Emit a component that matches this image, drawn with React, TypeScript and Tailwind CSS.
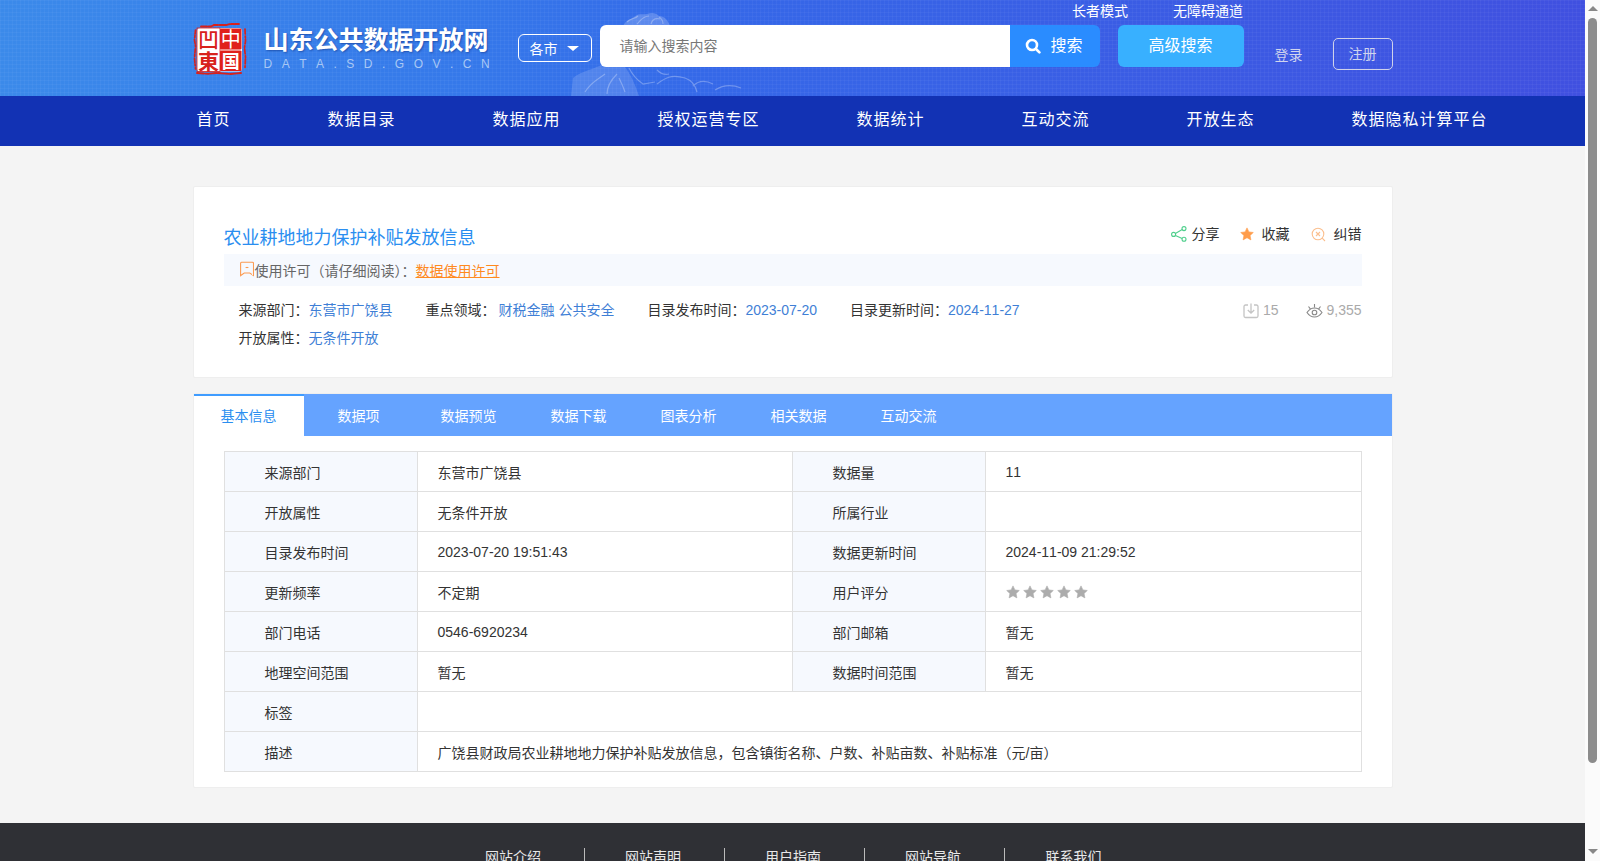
import React from "react";

const nav = ["首页", "数据目录", "数据应用", "授权运营专区", "数据统计", "互动交流", "开放生态", "数据隐私计算平台"];
const tabs = ["基本信息", "数据项", "数据预览", "数据下载", "图表分析", "相关数据", "互动交流"];
const footer = ["网站介绍", "网站声明", "用户指南", "网站导航", "联系我们"];

const Star = ({ c, s = 14 }: { c: string; s?: number }) => (
  <svg width={s} height={s} viewBox="0 0 24 24" fill={c} className="block">
    <path d="M12 1.500l3.300 6.900 7.500 1-5.500 5.200 1.400 7.500L12 18.400l-6.700 3.700 1.400-7.500L1.200 9.400l7.500-1z" stroke={c} strokeWidth="1" strokeLinejoin="round" />
  </svg>
);

function Logo() {
  const f = "'Noto Sans CJK SC',sans-serif";
  return (
    <svg width="54" height="54" viewBox="0 0 54 54" className="block shrink-0">
      <g fill="none" stroke="#d9201a" strokeLinecap="round">
        <path d="M8 4.500h10l3-1.500h12l4-1h9" strokeWidth="1.800" strokeDasharray="6 1.500 3 1" />
        <path d="M2.500 8l-1 10 1 6-1 12 1 11" strokeWidth="1.700" strokeDasharray="4 1.500 2 2" />
        <path d="M52 7l.5 12-1 7 1 9-.5 11" strokeWidth="1.700" strokeDasharray="5 2 1.500 1.500" />
        <path d="M4 51l11 .8 9-.8 13 1 11-1" strokeWidth="1.900" strokeDasharray="7 1.500 3 1" />
      </g>
      <rect x="4" y="6" width="45" height="43.500" rx="3" fill="#fff" />
      <rect x="4" y="6" width="23" height="43.500" fill="none" stroke="#e0201b" strokeWidth="0.800" />
      <rect x="27" y="6.500" width="21.500" height="21" rx="1" fill="#e0201b" />
      <rect x="27" y="28.500" width="21.500" height="20.500" rx="1" fill="#e0201b" />
      <text x="37.750" y="24.500" textAnchor="middle" fontSize="20" fill="#fff" fontFamily={f}>中</text>
      <text x="37.750" y="45.500" textAnchor="middle" fontSize="18" fontWeight="700" fill="#fff" fontFamily={f}>国</text>
      <text x="15.500" y="25" textAnchor="middle" fontSize="21" fontWeight="500" fill="#d8221c" fontFamily={f}>凹</text>
      <text x="15.500" y="46.500" textAnchor="middle" fontSize="21" fontWeight="700" fill="#d8221c" fontFamily={f}>東</text>
    </svg>
  );
}

function Mountain() {
  return (
    <svg width="200" height="96" viewBox="0 0 200 96" className="absolute left-[565px] top-0" fill="#fff">
      <g opacity="0.2">
        <path d="M58 26c3-6 8-7 11-9 4-4 9-2 13-3 5-2 9-1 12 2 5 0 9 4 11 10z" />
      </g>
      <g opacity="0.14">
        <path d="M8 78c10-8 20-8 30-14 8-2 14 1 22 3 6 8 10 17 14 29H6z" />
      </g>
      <g opacity="0.28" fill="none" stroke="#fff" strokeWidth="1.200">
        <path d="M62 22c4-4 8-3 11-6M72 24c3-3 6-8 12-8M86 24c1-4 4-6 9-5M98 24c0-3-1-5-4-7" />
        <path d="M20 92c6-10 12-12 20-18M42 94c0-8 4-14 10-20M60 92c-2-6-4-10-6-14" />
        <path d="M64 68c4 8 8 12 14 16l12-2M92 84c8-6 14-10 28-6 6 2 10 6 12 14M128 86c6-6 12-6 20-2M92 70c4 4 8 5 12 4M150 90c8-5 16-6 26-2" />
      </g>
    </svg>
  );
}

const Th = ({ children, w }: { children?: React.ReactNode; w: string }) => (
  <td className={`${w} h-10 border border-[#e0e0e0] bg-[#f6f9fe] pl-10 align-middle`}>
    <span className="relative top-[1px]">{children}</span>
  </td>
);
const Td = ({ children, w, colSpan }: { children?: React.ReactNode; w?: string; colSpan?: number }) => (
  <td colSpan={colSpan} className={`${w ?? ""} h-10 border border-[#e0e0e0] pl-5 align-middle`}>
    {children}
  </td>
);
const Cjk = ({ children }: { children: React.ReactNode }) => <span className="relative top-[1px]">{children}</span>;

const rows: [string, React.ReactNode, string, React.ReactNode][] = [
  ["来源部门", <Cjk>东营市广饶县</Cjk>, "数据量", "11"],
  ["开放属性", <Cjk>无条件开放</Cjk>, "所属行业", ""],
  ["目录发布时间", "2023-07-20 19:51:43", "数据更新时间", "2024-11-09 21:29:52"],
  [
    "更新频率",
    <Cjk>不定期</Cjk>,
    "用户评分",
    <div className="flex gap-[3px]">
      {[0, 1, 2, 3, 4].map((i) => (
        <Star key={i} c="#acacac" />
      ))}
    </div>,
  ],
  ["部门电话", "0546-6920234", "部门邮箱", <Cjk>暂无</Cjk>],
  ["地理空间范围", <Cjk>暂无</Cjk>, "数据时间范围", <Cjk>暂无</Cjk>],
];

export default function App() {
  return (
    <div className="flex h-[861px] overflow-hidden bg-[#fbfbfb] font-['Liberation_Sans','Noto_Sans_CJK_SC',sans-serif] text-sm text-[#333] [font-kerning:none]">
      <div className="w-[1585px] shrink-0 bg-[#f4f4f4]">
        <header className="relative h-24 bg-[linear-gradient(90deg,#3b8aea_0%,#3578ea_30%,#3568e8_45%,#4050e0_100%)]">
          <div className="absolute inset-0 bg-[linear-gradient(rgba(255,255,255,0.035)_1px,transparent_1px),linear-gradient(90deg,rgba(255,255,255,0.035)_1px,transparent_1px)] bg-[length:4px_4px]" />
          <Mountain />
          <div className="absolute right-[342px] top-[1px] flex gap-[45px] text-white">
            <span>长者模式</span>
            <span>无障碍通道</span>
          </div>
          <div className="relative mx-auto flex w-[1200px] items-start pt-[22px]">
            <Logo />
            <div className="ml-[17px] w-[254px] shrink-0">
              <div className="text-[25px] font-bold leading-[36px] text-white [text-shadow:1px_1px_2px_rgba(10,40,120,0.5)]">山东公共数据开放网</div>
              <div className="text-xs leading-[12px] tracking-[9.5px] whitespace-nowrap text-[#a9c8f4]">DATA.SD.GOV.CN</div>
            </div>
            <div className="mt-3 flex h-7 w-[74px] shrink-0 items-center rounded-md border border-white pl-[11px] text-white">
              <span className="relative top-[1px]">各市</span>
              <span className="ml-[9px] h-0 w-0 border-x-[6px] border-t-[5px] border-x-transparent border-t-white" />
            </div>
            <div className="ml-2 mt-[3px] flex h-[42px] w-[410px] shrink-0 items-center rounded-l-md bg-white pl-5 text-[#777]">请输入搜索内容</div>
            <div className="mt-[3px] flex h-[42px] w-[90px] shrink-0 items-center rounded-r-md bg-[#2a8cff] pl-[15px] text-base text-white">
              <svg width="16" height="16" viewBox="0 0 16 16" fill="none" stroke="#fff" strokeWidth="2.600" strokeLinecap="round">
                <circle cx="7" cy="7" r="5" />
                <path d="M11 11l3.400 3.400" />
              </svg>
              <span className="ml-[10px]">搜索</span>
            </div>
            <div className="ml-[18px] mt-[3px] flex h-[42px] w-[126px] shrink-0 items-center justify-center rounded-md bg-[#38b0ff] text-base text-white">高级搜索</div>
            <span className="ml-[31px] mt-[23px] shrink-0 whitespace-nowrap text-[#d0d4ee]">登录</span>
            <div className="ml-[30px] mt-4 flex h-8 w-[60px] shrink-0 items-center justify-center rounded-[5px] border border-[#cfd2ea] text-[#d0d4ee]">注册</div>
          </div>
        </header>
        <nav className="h-[50px] bg-[#1232b4]">
          <div className="mx-auto flex h-full w-[1200px] items-center gap-[97px] pb-[2px] pl-[4px] text-base tracking-[1px] text-white">
            {nav.map((n) => (
              <span key={n} className="whitespace-nowrap">{n}</span>
            ))}
          </div>
        </nav>

        <main className="mx-auto w-[1200px]">
          <section className="mt-[40px] h-[192px] rounded-[2px] border border-[#eeeeee] bg-white px-[30px]">
            <div className="flex h-[67px] items-start justify-between">
              <h1 className="mt-[39px] text-lg leading-[24px] text-[#2a8ef0]">农业耕地地力保护补贴发放信息</h1>
              <div className="mt-[37px] flex items-center leading-[20px] text-[#333]">
                <svg width="16" height="16" viewBox="0 0 16 16" fill="none" stroke="#4fcf8c" strokeWidth="1.100">
                  <circle cx="2.600" cy="8.400" r="2" />
                  <circle cx="13" cy="2.600" r="2" />
                  <circle cx="13" cy="13.200" r="2" />
                  <path d="M4.400 7.400l6.800-3.800M4.400 9.400l6.800 3" />
                </svg>
                <span className="ml-[5px]">分享</span>
                <span className="ml-5"><Star c="#ff9c4a" /></span>
                <span className="ml-2">收藏</span>
                <svg width="15" height="15" viewBox="0 0 15 15" fill="none" stroke="#fbbf8e" strokeWidth="1.100" className="ml-[21px]">
                  <circle cx="7" cy="7" r="5.800" />
                  <path d="M5 5l4 4M9 5l-4 4M11.200 11.200l2.800 2.800" />
                </svg>
                <span className="ml-2">纠错</span>
              </div>
            </div>
            <div className="flex h-8 items-center bg-[#f6f9fe] pl-4 pt-[2px] text-[#666]">
              <svg width="14" height="16" viewBox="0 0 14 16" fill="none" stroke="#fb9b52" strokeWidth="1.100" className="-mt-[5px]">
                <path d="M1.500 1.200h11a1 1 0 0 1 1 1v12.400l-3.700-2.600H4.200L.6 14.600V2.200a1 1 0 0 1 .9-1z" />
                <path d="M5.600 6.500h2.800" />
              </svg>
              <span className="ml-[1px]">使用许可（请仔细阅读）：</span>
              <span className="text-[#ff8a1e] underline">数据使用许可</span>
            </div>
            <div className="flex pl-[15px] pt-[10px] leading-[28px]">
              <span>来源部门：</span>
              <span className="text-[#3f7fd6]">东营市广饶县</span>
              <span className="ml-[33px]">重点领域：</span>
              <span className="ml-[3px] text-[#3f7fd6]">财税金融 公共安全</span>
              <span className="ml-[33px]">目录发布时间：</span>
              <span className="text-[#3f7fd6]">2023-07-20</span>
              <span className="ml-[33px]">目录更新时间：</span>
              <span className="text-[#3f7fd6]">2024-11-27</span>
              <span className="ml-auto flex items-center text-[#aaa]">
                <svg width="16" height="16" viewBox="0 0 16 16" fill="none" stroke="#c4c4c4" strokeWidth="1.300" className="mt-[1px]">
                  <path d="M5 2H2.500A1.500 1.500 0 0 0 1 3.500v9.500A1.500 1.500 0 0 0 2.500 14.500h11a1.500 1.500 0 0 0 1.500-1.500V3.500A1.500 1.500 0 0 0 13.500 2H11M8 0.500v9.500M4.800 7l3.200 3.200L11.200 7" />
                </svg>
                <span className="ml-1">15</span>
                <svg width="17" height="17" viewBox="0 0 17 17" fill="none" stroke="#888" strokeWidth="1.100" className="ml-[28px] mt-[3px]">
                  <path d="M1 9.500c2-3 4.500-4.500 7.500-4.500s5.500 1.500 7.500 4.500c-2 3-4.500 4.500-7.500 4.500S3 12.500 1 9.500z" />
                  <circle cx="8.500" cy="9.500" r="2.300" />
                  <path d="M2.500 3.500L4.500 6.200M8.500 1V4.500M14.500 3.500l-2 2.700" />
                </svg>
                <span className="ml-[3px]">9,355</span>
              </span>
            </div>
            <div className="pl-[15px] leading-[28px]">
              <span>开放属性：</span>
              <span className="text-[#3f7fd6]">无条件开放</span>
            </div>
          </section>

          <section className="mt-[15px] h-[395px] rounded-[2px] border border-[#eeeeee] bg-white">
            <div className="flex h-[42px] bg-[#65a3ff] text-white">
              {tabs.map((t, i) => (
                <div
                  key={t}
                  className={
                    i === 0
                      ? "flex w-[110px] items-center justify-center border-t-2 border-[#3f9cff] bg-white text-[#2a8ef0]"
                      : "flex w-[110px] items-center justify-center pt-[2px]"
                  }
                >
                  {t}
                </div>
              ))}
            </div>
            <div className="px-[30px] pt-[15px]">
              <table className="w-full table-fixed border-collapse leading-5">
                <tbody>
                  {rows.map((r) => (
                    <tr key={r[0]}>
                      <Th w="w-[193px]">{r[0]}</Th>
                      <Td w="w-[375px]">{r[1]}</Td>
                      <Th w="w-[193px]">{r[2]}</Th>
                      <Td>{r[3]}</Td>
                    </tr>
                  ))}
                  <tr>
                    <Th w="w-[193px]">标签</Th>
                    <Td colSpan={3} />
                  </tr>
                  <tr>
                    <Th w="w-[193px]">描述</Th>
                    <Td colSpan={3}>
                      <Cjk>广饶县财政局农业耕地地力保护补贴发放信息，包含镇街名称、户数、补贴亩数、补贴标准（元/亩）</Cjk>
                    </Td>
                  </tr>
                </tbody>
              </table>
            </div>
          </section>
        </main>

        <footer className="mt-[35px] h-[132px] bg-[#2f3035] pt-[25px]">
          <div className="ml-[445px] flex text-[#e8e8e8]">
            {footer.map((f, i) => (
              <div key={f} className={`flex h-[14px] w-[140px] items-center justify-center pr-[3px] ${i < 4 ? "border-r border-[#bbb]" : ""}`}>
                <span className="relative top-[2px]">{f}</span>
              </div>
            ))}
          </div>
        </footer>
      </div>
      <div className="flex h-full w-[15px] shrink-0 flex-col items-center">
        <span className="mt-[6px] h-0 w-0 border-x-[5px] border-b-[5px] border-x-transparent border-b-[#888]" />
        <div className="mt-[7px] h-[745px] w-[9px] rounded-full bg-[#8c8c8c]" />
        <span className="mb-[7px] mt-auto h-0 w-0 border-x-[5px] border-t-[5px] border-x-transparent border-t-[#888]" />
      </div>
    </div>
  );
}
